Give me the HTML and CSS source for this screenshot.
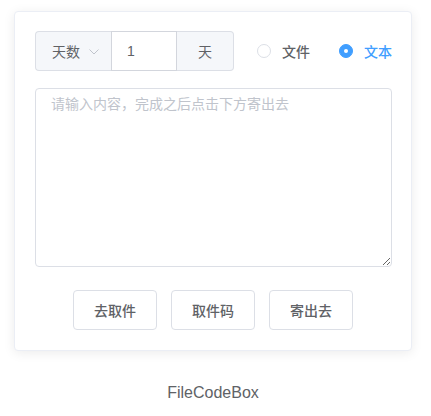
FILE: index.html
```html
<!DOCTYPE html>
<html>
<head>
<meta charset="utf-8">
<link rel="stylesheet" href="styles.css">
</head>
<body>
<div class="page">
  <div class="card">
    <div class="top-row">
      <div class="input-group">
        <div class="prepend">
          <span class="sel-text">天数</span>
          <svg class="chev" width="10" height="6" viewBox="0 0 10 6"><path d="M0.5 0.5 L5 5 L9.5 0.5" fill="none" stroke="#c0c4cc" stroke-width="1"/></svg>
        </div>
        <input class="num" type="text" value="1">
        <div class="append">天</div>
      </div>
      <div class="radios">
        <label class="radio"><span class="circle"></span><span class="rlabel">文件</span></label>
        <label class="radio checked"><span class="circle"></span><span class="rlabel">文本</span></label>
      </div>
    </div>
    <textarea class="content" placeholder="请输入内容，完成之后点击下方寄出去"></textarea>
    <div class="buttons">
      <button class="btn">去取件</button>
      <button class="btn">取件码</button>
      <button class="btn">寄出去</button>
    </div>
  </div>
  <div class="footer">FileCodeBox</div>
</div>
</body>
</html>
```

FILE: styles.css
```css
* { box-sizing: border-box; }
html, body { margin: 0; padding: 0; background: #fff; }
body {
  font-family: "Liberation Sans", "Noto Sans CJK SC", sans-serif;
  color: #606266;
}
.page {
  width: 398px;
  margin: 11px 0 0 14px;
}
.card {
  border: 1px solid #ebeef5;
  border-radius: 4px;
  box-shadow: 0 2px 12px 0 rgba(0,0,0,0.08);
  padding: 19px 20px 20px;
  background: #fff;
}
.top-row {
  display: flex;
  align-items: center;
  height: 40px;
}
.input-group {
  display: flex;
  flex-shrink: 0;
  height: 40px;
  width: 199px;
  font-size: 14px;
}
.prepend {
  width: 76px;
  background: #f5f7fa;
  border: 1px solid #dcdfe6;
  border-right: none;
  border-radius: 4px 0 0 4px;
  display: flex;
  align-items: center;
  padding-left: 16px;
  color: #606266;
}
.sel-text { font-family: "Noto Sans CJK SC", sans-serif; }
.chev { margin-left: 9px; margin-top: 1px; }
.num {
  width: 66px;
  height: 40px;
  border: 1px solid #d3d6dd;
  margin: 0;
  padding: 0 15px;
  font: 14px "Liberation Sans", sans-serif;
  color: #606266;
  outline: none;
  background: #fff;
}
.append {
  flex: 1;
  background: #f5f7fa;
  border: 1px solid #dcdfe6;
  border-left: none;
  border-radius: 0 4px 4px 0;
  display: flex;
  align-items: center;
  justify-content: center;
  font-family: "Noto Sans CJK SC", sans-serif;
}
.radios {
  display: flex;
  align-items: center;
  margin-left: 23px;
  white-space: nowrap;
  flex-shrink: 0;
}
.radio {
  display: flex;
  align-items: center;
  flex-shrink: 0;
  margin-right: 29px;
  font-size: 14px;
  font-weight: 500;
  font-family: "Noto Sans CJK SC", sans-serif;
  color: #606266;
  white-space: nowrap;
}
.radio:last-child { margin-right: 0; }
.circle {
  flex-shrink: 0;
  width: 14px;
  height: 14px;
  border: 1px solid #dcdfe6;
  border-radius: 50%;
  background: #fff;
  position: relative;
}
.radio.checked .circle {
  border-color: #409eff;
  background: #409eff;
}
.radio.checked .circle::after {
  content: "";
  position: absolute;
  width: 4px;
  height: 4px;
  border-radius: 50%;
  background: #fff;
  left: 4px;
  top: 4px;
}
.rlabel { margin-left: 11px; }
.radio.checked .rlabel { color: #409eff; }
.content {
  display: block;
  width: 357px;
  height: 179px;
  margin-top: 17px;
  border: 1px solid #dcdfe6;
  border-radius: 4px;
  padding: 5px 15px;
  font: 14px/1.5 "Liberation Sans", "Noto Sans CJK SC", sans-serif;
  color: #606266;
  outline: none;
  resize: vertical;
}
.content::placeholder { color: #c0c4cc; }
.buttons {
  display: flex;
  justify-content: center;
  gap: 14px;
  margin-top: 23px;
}
.btn {
  width: 84px;
  height: 40px;
  border: 1px solid #dcdfe6;
  border-radius: 4px;
  background: #fff;
  font: 500 14px "Noto Sans CJK SC", sans-serif;
  color: #606266;
  padding: 0;
}
.footer {
  text-align: center;
  font-size: 16px;
  color: #606266;
  margin-top: 33px;
}
```
